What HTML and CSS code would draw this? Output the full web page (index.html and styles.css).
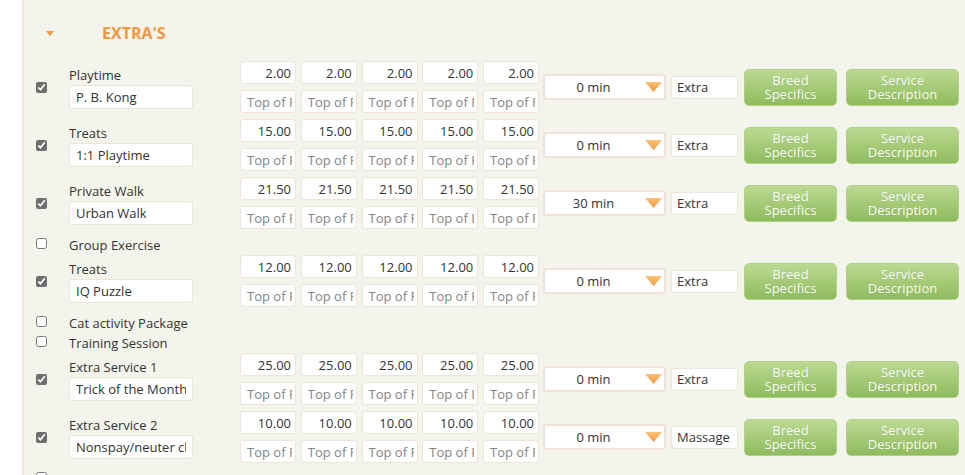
FILE: index.html
```html
<!DOCTYPE html>
<html>
<head>
	<meta charset="utf-8">
	<title>Extra's</title>
	<link rel="stylesheet" href="styles.css">
</head>
<body>
	<div class="panel">
		<div class="section-head"><span class="caret"></span><h3>EXTRA'S</h3></div>

		<div class="svc-row">
			<input type="checkbox" class="chk" checked>
			<div class="name"><label>Playtime</label><input type="text" class="textbox" value="P. B. Kong"></div>
			<div class="prices">
				<input type="text" class="price" value="2.00"><input type="text" class="price" value="2.00"><input type="text" class="price" value="2.00"><input type="text" class="price" value="2.00"><input type="text" class="price" value="2.00">
				<input type="text" class="range" placeholder="Top of Range"><input type="text" class="range" placeholder="Top of Range"><input type="text" class="range" placeholder="Top of Range"><input type="text" class="range" placeholder="Top of Range"><input type="text" class="range" placeholder="Top of Range">
			</div>
			<div class="dur"><select><option>0 min</option><option>15 min</option><option>30 min</option></select></div>
			<input type="text" class="kind" value="Extra">
			<a class="btn btn-breed">Breed<br>Specifics</a>
			<a class="btn btn-desc">Service<br>Description</a>
		</div>

		<div class="svc-row">
			<input type="checkbox" class="chk" checked>
			<div class="name"><label>Treats</label><input type="text" class="textbox" value="1:1 Playtime"></div>
			<div class="prices">
				<input type="text" class="price" value="15.00"><input type="text" class="price" value="15.00"><input type="text" class="price" value="15.00"><input type="text" class="price" value="15.00"><input type="text" class="price" value="15.00">
				<input type="text" class="range" placeholder="Top of Range"><input type="text" class="range" placeholder="Top of Range"><input type="text" class="range" placeholder="Top of Range"><input type="text" class="range" placeholder="Top of Range"><input type="text" class="range" placeholder="Top of Range">
			</div>
			<div class="dur"><select><option>0 min</option><option>15 min</option><option>30 min</option></select></div>
			<input type="text" class="kind" value="Extra">
			<a class="btn btn-breed">Breed<br>Specifics</a>
			<a class="btn btn-desc">Service<br>Description</a>
		</div>

		<div class="svc-row">
			<input type="checkbox" class="chk" checked>
			<div class="name"><label>Private Walk</label><input type="text" class="textbox" value="Urban Walk"></div>
			<div class="prices">
				<input type="text" class="price" value="21.50"><input type="text" class="price" value="21.50"><input type="text" class="price" value="21.50"><input type="text" class="price" value="21.50"><input type="text" class="price" value="21.50">
				<input type="text" class="range" placeholder="Top of Range"><input type="text" class="range" placeholder="Top of Range"><input type="text" class="range" placeholder="Top of Range"><input type="text" class="range" placeholder="Top of Range"><input type="text" class="range" placeholder="Top of Range">
			</div>
			<div class="dur"><select><option>0 min</option><option>15 min</option><option selected>30 min</option></select></div>
			<input type="text" class="kind" value="Extra">
			<a class="btn btn-breed">Breed<br>Specifics</a>
			<a class="btn btn-desc">Service<br>Description</a>
		</div>

		<div class="svc-line"><input type="checkbox" class="chk"><label>Group Exercise</label></div>

		<div class="svc-row">
			<input type="checkbox" class="chk" checked>
			<div class="name"><label>Treats</label><input type="text" class="textbox" value="IQ Puzzle"></div>
			<div class="prices">
				<input type="text" class="price" value="12.00"><input type="text" class="price" value="12.00"><input type="text" class="price" value="12.00"><input type="text" class="price" value="12.00"><input type="text" class="price" value="12.00">
				<input type="text" class="range" placeholder="Top of Range"><input type="text" class="range" placeholder="Top of Range"><input type="text" class="range" placeholder="Top of Range"><input type="text" class="range" placeholder="Top of Range"><input type="text" class="range" placeholder="Top of Range">
			</div>
			<div class="dur"><select><option>0 min</option><option>15 min</option><option>30 min</option></select></div>
			<input type="text" class="kind" value="Extra">
			<a class="btn btn-breed">Breed<br>Specifics</a>
			<a class="btn btn-desc">Service<br>Description</a>
		</div>

		<div class="svc-line"><input type="checkbox" class="chk"><label>Cat activity Package</label></div>
		<div class="svc-line"><input type="checkbox" class="chk"><label>Training Session</label></div>

		<div class="svc-row">
			<input type="checkbox" class="chk" checked>
			<div class="name"><label>Extra Service 1</label><input type="text" class="textbox" value="Trick of the Month"></div>
			<div class="prices">
				<input type="text" class="price" value="25.00"><input type="text" class="price" value="25.00"><input type="text" class="price" value="25.00"><input type="text" class="price" value="25.00"><input type="text" class="price" value="25.00">
				<input type="text" class="range" placeholder="Top of Range"><input type="text" class="range" placeholder="Top of Range"><input type="text" class="range" placeholder="Top of Range"><input type="text" class="range" placeholder="Top of Range"><input type="text" class="range" placeholder="Top of Range">
			</div>
			<div class="dur"><select><option>0 min</option><option>15 min</option><option>30 min</option></select></div>
			<input type="text" class="kind" value="Extra">
			<a class="btn btn-breed">Breed<br>Specifics</a>
			<a class="btn btn-desc">Service<br>Description</a>
		</div>

		<div class="svc-row">
			<input type="checkbox" class="chk" checked>
			<div class="name"><label>Extra Service 2</label><input type="text" class="textbox" value="Nonspay/neuter check"></div>
			<div class="prices">
				<input type="text" class="price" value="10.00"><input type="text" class="price" value="10.00"><input type="text" class="price" value="10.00"><input type="text" class="price" value="10.00"><input type="text" class="price" value="10.00">
				<input type="text" class="range" placeholder="Top of Range"><input type="text" class="range" placeholder="Top of Range"><input type="text" class="range" placeholder="Top of Range"><input type="text" class="range" placeholder="Top of Range"><input type="text" class="range" placeholder="Top of Range">
			</div>
			<div class="dur"><select><option>0 min</option><option>15 min</option><option>30 min</option></select></div>
			<input type="text" class="kind" value="Massage">
			<a class="btn btn-breed">Breed<br>Specifics</a>
			<a class="btn btn-desc">Service<br>Description</a>
		</div>

		<div class="svc-line"><input type="checkbox" class="chk"><label>Spin Time</label></div>
	</div>
</body>
</html>
```

FILE: styles.css
```css
*{margin: 0; padding: 0; box-sizing: border-box;}
body{
	background: #fff;
	font-family: "Open Sans", "Liberation Sans", sans-serif;
	font-size: 13px;
	color: #333;
	overflow: hidden;
}
.panel{
	margin-left: 22px;
	min-height: 480px;
	padding-top: 20px;
	background: #f3f5ec;
	border-left: 2px solid #f0e5d9;
}
.section-head{
	display: flex;
	align-items: center;
	height: 26px;
	padding-left: 22px;
	margin-bottom: 15px;
}
.caret{
	width: 0;
	height: 0;
	border-left: 4.5px solid transparent;
	border-right: 4.5px solid transparent;
	border-top: 5px solid #f7963e;
}
.section-head h3{
	margin-left: 48px;
	font-size: 16px;
	font-weight: bold;
	color: #f7963e;
}
.chk{
	width: 11px;
	height: 11px;
	margin: 0;
	accent-color: #6e6e6e;
	flex: none;
}
.svc-row{
	display: flex;
	align-items: center;
	height: 52px;
	margin-bottom: 6px;
	padding-left: 12px;
}
.svc-line{
	display: flex;
	align-items: center;
	height: 20px;
	padding-left: 12px;
}
.svc-line .chk{
	margin-bottom: 4px;
}
.svc-line label{
	margin-left: 22px;
	line-height: 20px;
}
.name{
	margin-left: 22px;
	width: 124px;
	flex: none;
}
.name label{
	display: block;
	line-height: 20px;
}
input[type=text], select{
	font-family: "Open Sans", "Liberation Sans", sans-serif;
	font-size: 13px;
	color: #333;
	background: #fff;
	border: 1px solid #f1e3d8;
	border-radius: 3px;
	outline: none;
}
input::placeholder{
	color: #858585;
}
.textbox{
	display: block;
	width: 124px;
	height: 24px;
	padding: 0 6px;
}
.prices{
	margin-left: 47px;
	display: grid;
	grid-template-columns: repeat(5, 56px);
	column-gap: 4.75px;
	row-gap: 6px;
	flex: none;
}
.price, .range{
	width: 56px;
	height: 23px;
}
.price{
	text-align: right;
	padding: 0 4px;
}
.range{
	padding: 0 3px 0 6px;
}
.dur{
	position: relative;
	margin-left: 4px;
	width: 123px;
	height: 26px;
	flex: none;
}
.dur select{
	appearance: none;
	width: 100%;
	height: 100%;
	padding: 0 22px 0 0;
	text-align: center;
	text-align-last: center;
	border-color: #f0e2d9;
	border-width: 2px;
}
.dur::after{
	content: "";
	position: absolute;
	right: 4px;
	top: 8px;
	width: 17px;
	height: 10px;
	background: linear-gradient(#fcc37a, #f5963b);
	clip-path: polygon(0 0, 100% 0, 50% 100%);
	pointer-events: none;
}
.kind{
	margin-left: 5px;
	width: 67px;
	height: 23px;
	padding: 0 5px;
	flex: none;
}
.btn{
	display: flex;
	align-items: center;
	justify-content: center;
	height: 37px;
	border-radius: 5px;
	border: 1px solid #b0d188;
	background: linear-gradient(#bbda92, #8fbb5d);
	color: #fff;
	font-size: 13px;
	line-height: 14px;
	text-align: center;
	text-shadow: 0 0 1px rgba(90, 130, 50, 0.4);
	flex: none;
	cursor: pointer;
}
.btn-breed{
	margin-left: 6px;
	width: 93px;
}
.btn-desc{
	margin-left: 9px;
	width: 113px;
}
```
